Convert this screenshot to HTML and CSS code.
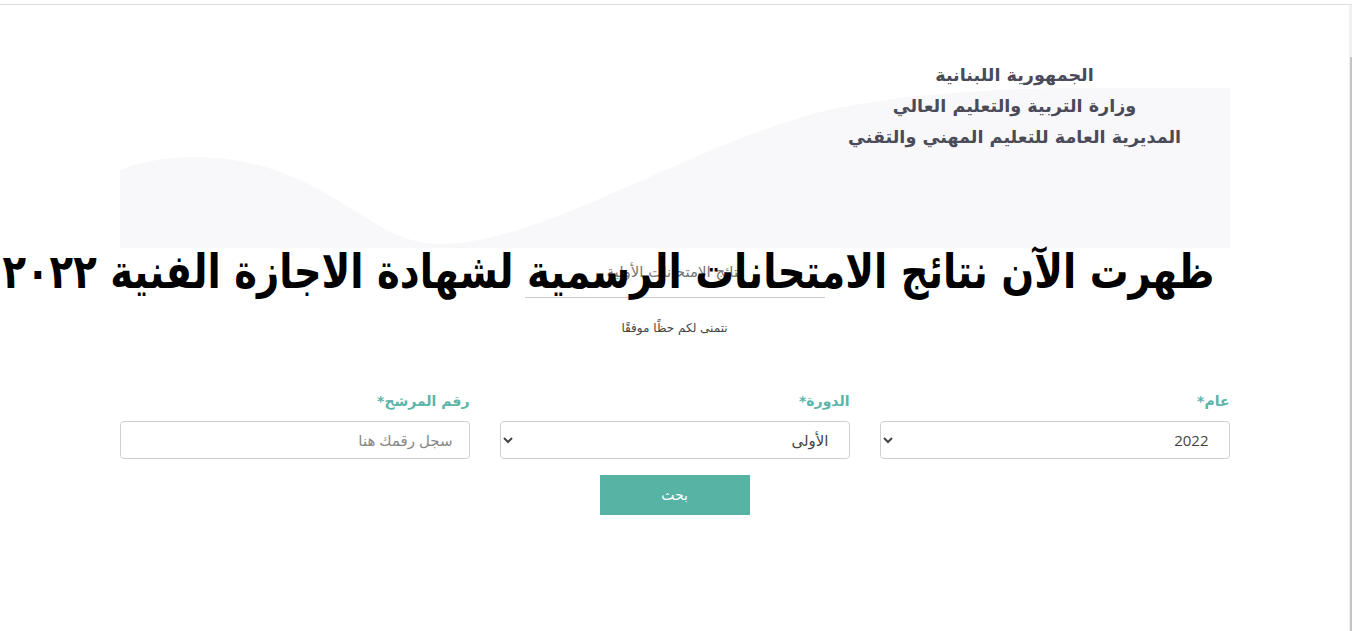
FILE: index.html
```html
<!DOCTYPE html>
<html lang="ar">
<head>
    <meta charset="UTF-8">
    <title>نتائج الامتحانات الرسمية</title>
    <link rel="stylesheet" href="styles.css">
</head>
<body>
    <div class="page">
        <div class="main" dir="rtl">
            <div class="hero">
                <svg class="wave" viewBox="0 0 1110 160" preserveAspectRatio="none">
                    <path d="M0,82 C40,66 110,60 180,92 C240,120 270,156 320,156 C420,156 560,62 700,24 C830,-6 1000,0 1110,0 L1110,160 L0,160 Z" fill="#f8f8fa"/>
                </svg>
                <div class="gov">
                    <p>الجمهورية اللبنانية</p>
                    <p>وزارة التربية والتعليم العالي</p>
                    <p>المديرية العامة للتعليم المهني والتقني</p>
                </div>
            </div>

            <div class="intro">
                <h1 class="headline">ظهرت الآن نتائج الامتحانات الرسمية لشهادة الاجازة الفنية ٢٠٢٢</h1>
                <h2 class="subtitle">نتائج الامتحانات الأولية</h2>
                <p class="wish">نتمنى لكم حظًا موفقًا</p>
            </div>

            <form class="search">
                <div class="fields">
                    <div class="field">
                        <label for="year">عام*</label>
                        <select id="year"><option>2022</option></select>
                    </div>
                    <div class="field">
                        <label for="session">الدورة*</label>
                        <select id="session"><option>الأولى</option></select>
                    </div>
                    <div class="field">
                        <label for="number">رقم المرشح*</label>
                        <input type="text" id="number" placeholder="سجل رقمك هنا">
                    </div>
                </div>
                <button type="button" class="btn">بحث</button>
            </form>
        </div>
        <div class="scrollbar"><div class="thumb"></div></div>
    </div>
</body>
</html>
```

FILE: styles.css
```css
* { box-sizing: border-box; }
html, body { margin: 0; height: 100%; }
body { background: #fff; font-family: "DejaVu Sans", "Open Sans", sans-serif; color: #333; overflow: hidden; }

.page { display: flex; height: 100%; padding-top: 4px; }
.main { flex: 1; border-top: 1px solid #dcdcdc; overflow: hidden; }
.scrollbar { width: 3px; background: #f0f0f0; border-top: 1px solid #dcdcdc; }
.scrollbar .thumb { margin-top: 52px; margin-left: 1px; height: 100%; width: 2px; background: #c4c4c4; }

.hero { position: relative; width: 1110px; height: 243px; margin: 0 auto; }
.hero .wave { position: absolute; left: 0; bottom: 0; width: 1110px; height: 160px; display: block; }
.gov { position: relative; width: 430px; padding-top: 55px; text-align: center; color: #4a4a58; font-weight: bold; font-size: 17.6px; }
.gov p { margin: 0; line-height: 31px; }

.intro { position: relative; width: 1110px; margin: 0 auto; text-align: center; }
.headline { position: absolute; top: -6px; right: 15px; margin: 0; white-space: nowrap; font-size: 47px; font-weight: bold; color: #000; line-height: 60px; transform: scaleX(0.822); transform-origin: right center; }
.subtitle { width: 300px; margin: 0 auto; padding: 10px 0 11px; border-bottom: 1px solid #ccc; font-size: 15px; font-weight: normal; color: #777; line-height: 28px; }
.wish { margin: 23px 0 0; font-size: 12px; color: #444; }

.search { width: 1110px; margin: 56px auto 0; text-align: center; }
.fields { display: grid; grid-template-columns: repeat(3, 350px); gap: 30px; }
.field { text-align: right; }
.field label { display: block; margin-bottom: 10px; color: #5bb5a8; font-weight: bold; font-size: 14px; line-height: 20px; }
.field select, .field input { width: 100%; height: 38px; border: 1px solid #ccd0d6; border-radius: 4px; background: #fff; padding: 0 16px; font-family: "Open Sans", "DejaVu Sans", sans-serif; font-size: 15px; color: #444; }
.field input::placeholder { color: #888; }
.btn { margin-top: 16px; width: 150px; height: 40px; border: none; background: #57b3a4; color: #fff; font-family: "DejaVu Sans", sans-serif; font-size: 14px; }
```
